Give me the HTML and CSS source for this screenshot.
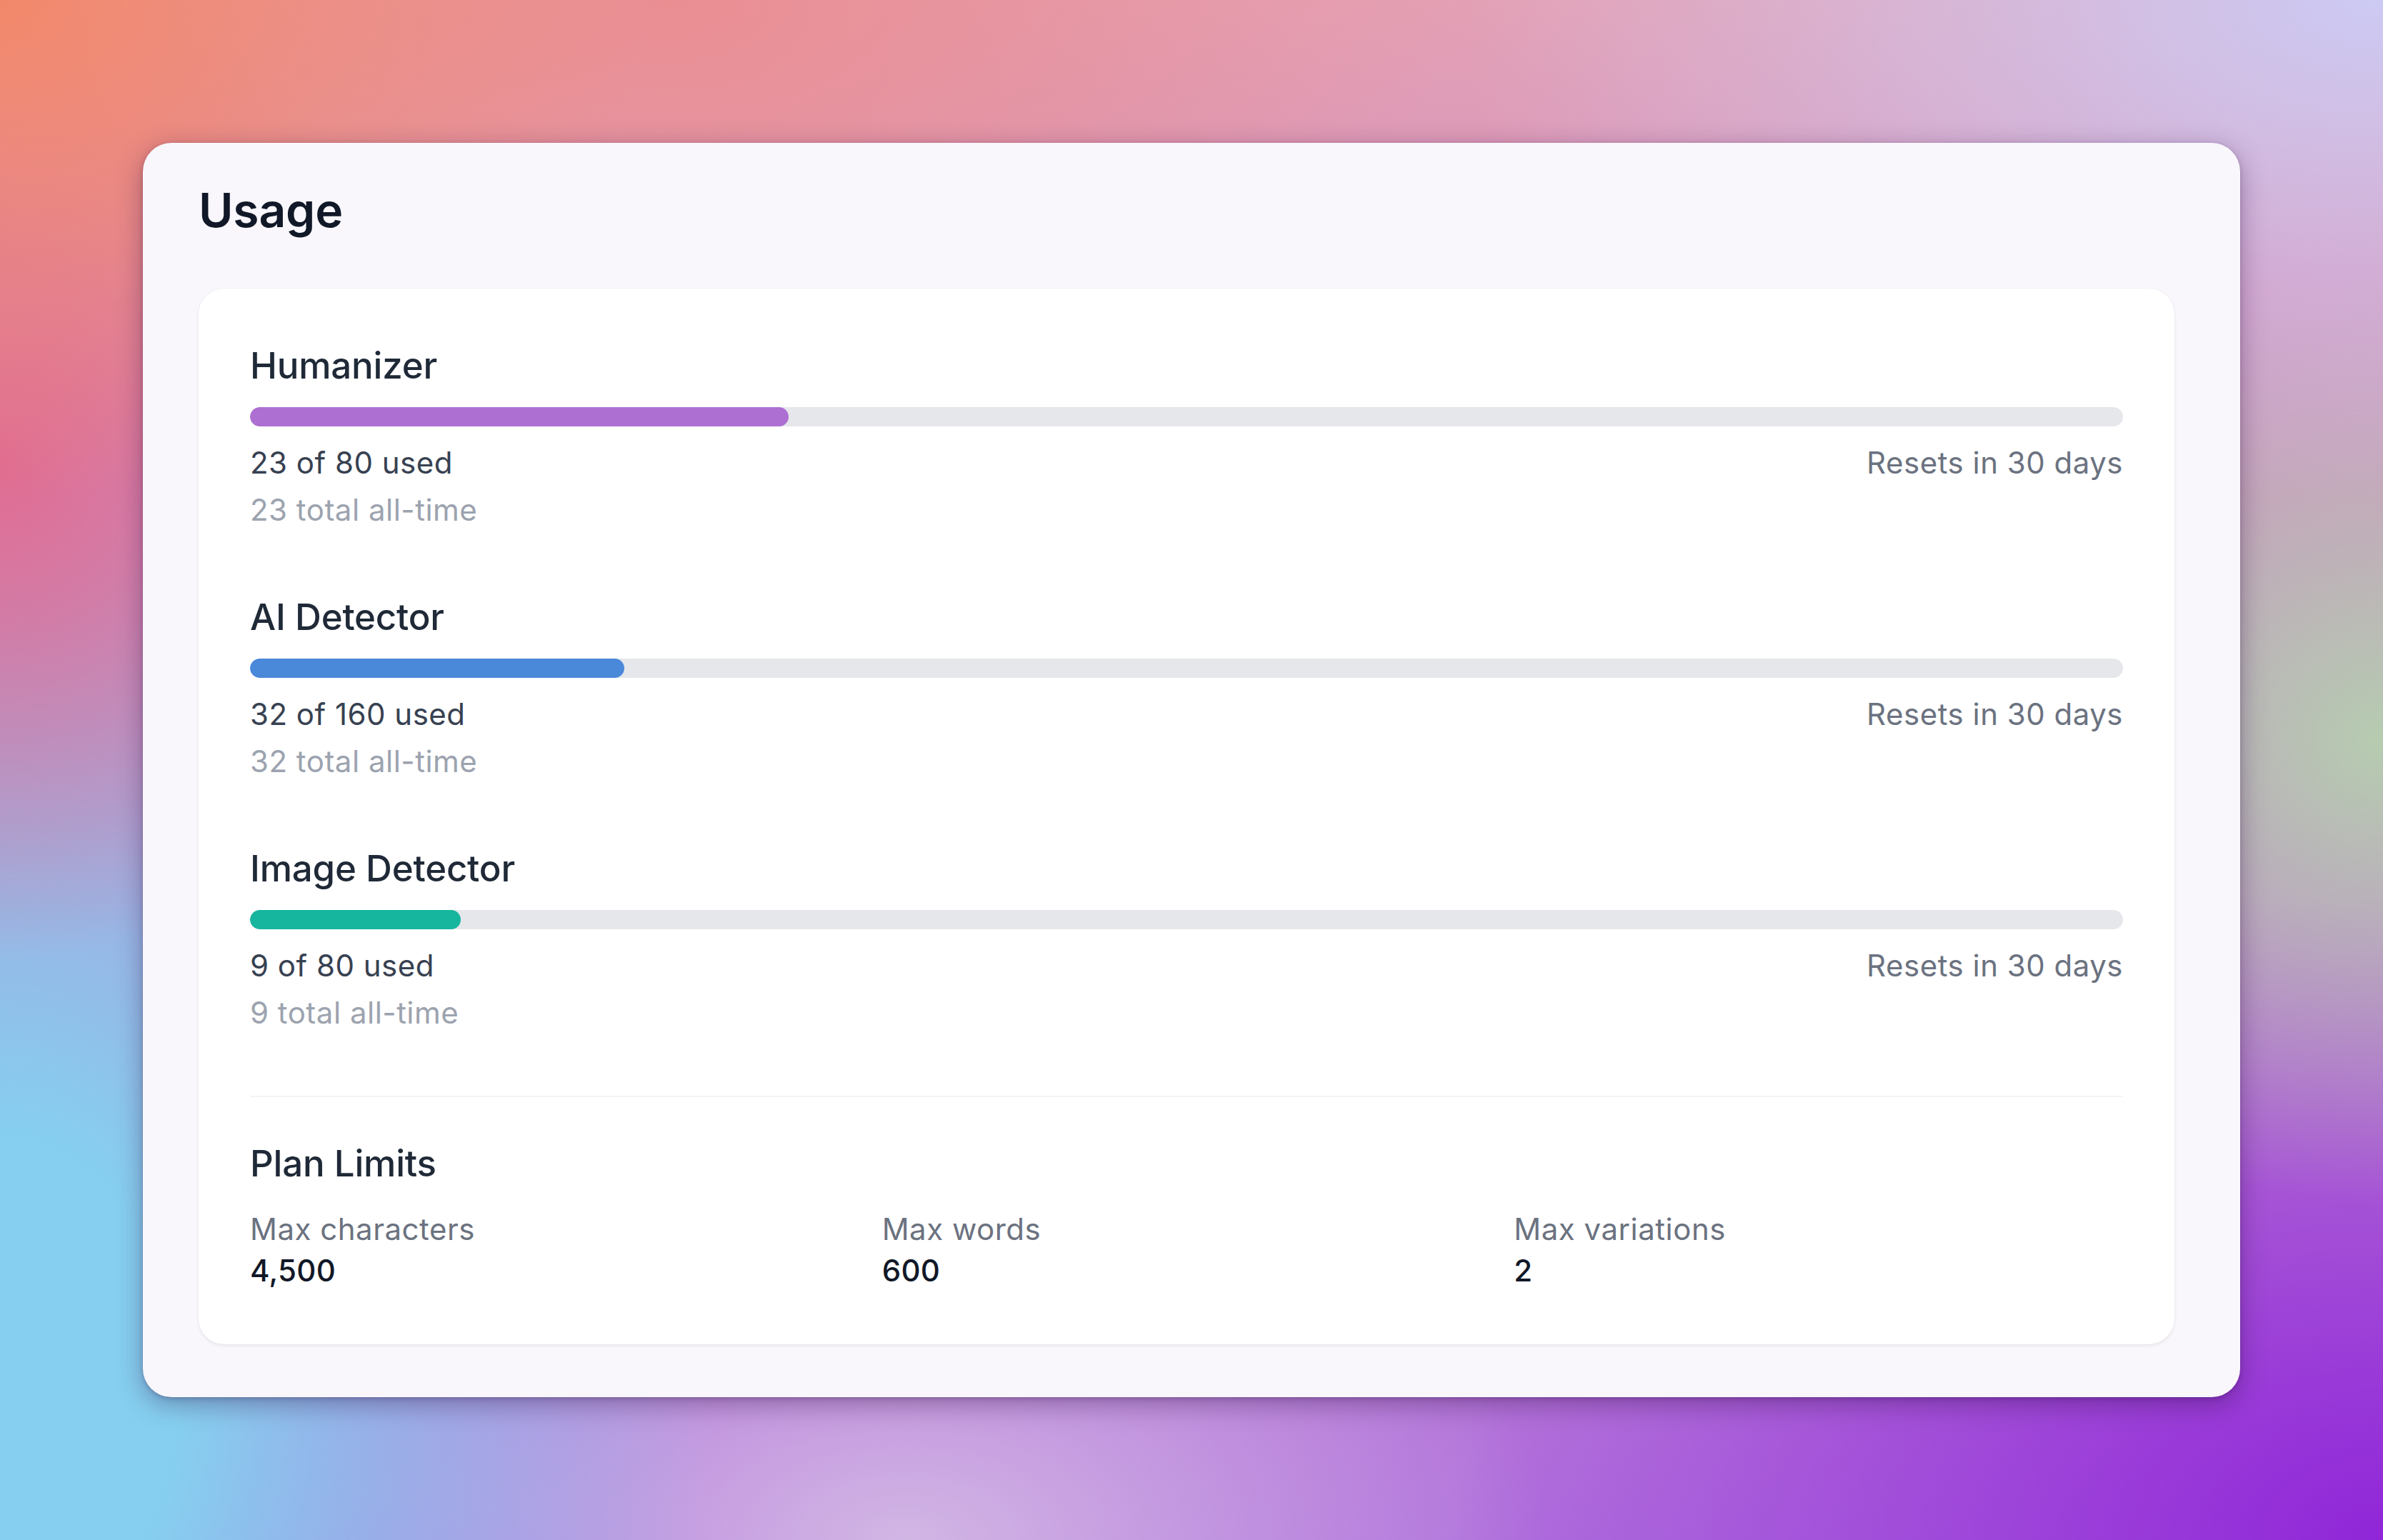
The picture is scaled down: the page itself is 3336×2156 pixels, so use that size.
FILE: index.html
```html
<!DOCTYPE html>
<html lang="en">
<head>
<meta charset="utf-8">
<title>Usage</title>
<link rel="stylesheet" href="styles.css">
</head>
<body>
<div class="page">
  <section class="card">
    <h1 class="title">Usage</h1>
    <div class="panel">
      <div class="meter">
        <h2 class="meter-name">Humanizer</h2>
        <div class="track"><div class="fill fill-purple" style="width: 28.75%"></div></div>
        <div class="meter-row">
          <span class="used">23 of 80 used</span>
          <span class="resets">Resets in 30 days</span>
        </div>
        <div class="total">23 total all-time</div>
      </div>
      <div class="meter">
        <h2 class="meter-name">AI Detector</h2>
        <div class="track"><div class="fill fill-blue" style="width: 20%"></div></div>
        <div class="meter-row">
          <span class="used">32 of 160 used</span>
          <span class="resets">Resets in 30 days</span>
        </div>
        <div class="total">32 total all-time</div>
      </div>
      <div class="meter">
        <h2 class="meter-name">Image Detector</h2>
        <div class="track"><div class="fill fill-teal" style="width: 11.25%"></div></div>
        <div class="meter-row">
          <span class="used">9 of 80 used</span>
          <span class="resets">Resets in 30 days</span>
        </div>
        <div class="total">9 total all-time</div>
      </div>
      <hr class="divider">
      <div class="limits">
        <h2 class="meter-name">Plan Limits</h2>
        <div class="limits-grid">
          <div class="limit">
            <div class="limit-label">Max characters</div>
            <div class="limit-value">4,500</div>
          </div>
          <div class="limit">
            <div class="limit-label">Max words</div>
            <div class="limit-value">600</div>
          </div>
          <div class="limit">
            <div class="limit-label">Max variations</div>
            <div class="limit-value">2</div>
          </div>
        </div>
      </div>
    </div>
  </section>
</div>
</body>
</html>
```
FILE: styles.css
```css
* { box-sizing: border-box; }

html, body {
  margin: 0;
  padding: 0;
}

body {
  width: 3336px;
  height: 2156px;
  overflow: hidden;
  font-family: Inter, "Noto Sans", "Liberation Sans", sans-serif;
  background-color: #c99ad8;
  background-image:
    radial-gradient(ellipse 900px 700px at 0% 0%, #f2886a 0%, rgba(242,136,106,0) 100%),
    radial-gradient(ellipse 1100px 600px at 28% 0%, #ea8e92 0%, rgba(234,142,146,0) 100%),
    radial-gradient(ellipse 600px 700px at 0% 30%, #e06c92 0%, rgba(224,108,146,0) 100%),
    radial-gradient(ellipse 1300px 700px at 100% 0%, #cccaf4 0%, rgba(204,202,244,0) 100%),
    radial-gradient(ellipse 700px 650px at 100% 48%, #b6ccb0 0%, rgba(182,204,176,0) 100%),
    radial-gradient(ellipse 1000px 1400px at 0% 90%, #86cff0 0%, #86cff0 25%, rgba(134,207,240,0) 100%),
    radial-gradient(ellipse 1300px 900px at 100% 100%, #9026d8 0%, rgba(144,38,216,0) 100%),
    radial-gradient(ellipse 900px 500px at 38% 100%, #d2b6e4 0%, rgba(210,182,228,0) 100%),
    linear-gradient(180deg, #e4a0b4 0%, #c486c8 45%, #b070dc 100%);
}

.page {
  padding: 200px;
}

.card {
  background: #f9f7fc;
  border-radius: 40px;
  padding: 54px 92px 74px 78px;
  box-shadow: 0 10px 36px rgba(40, 10, 60, 0.35), 0 2px 6px rgba(40, 10, 60, 0.2);
}

.title {
  margin: 0;
  font-size: 66px;
  line-height: 80px;
  font-weight: 600;
  color: #111827;
  letter-spacing: -0.2px;
}

.panel {
  margin-top: 70px;
  background: #ffffff;
  border-radius: 36px;
  padding: 77px 72px 74px 72px;
  box-shadow: 0 2px 5px rgba(0, 0, 0, 0.08), 0 0 2px rgba(0, 0, 0, 0.03);
}

.meter + .meter {
  margin-top: 86px;
}

.meter-name {
  margin: 0;
  font-size: 51px;
  line-height: 62px;
  font-weight: 500;
  color: #1f2937;
  letter-spacing: -0.2px;
}

.track {
  margin-top: 27px;
  height: 27px;
  border-radius: 14px;
  background: #e5e7eb;
  overflow: hidden;
}

.fill {
  height: 100%;
  border-radius: 14px;
}

.fill-purple { background: #ae6fd3; }
.fill-blue { background: #4a88d9; }
.fill-teal { background: #16b59e; }

.meter-row {
  margin-top: 18px;
  display: flex;
  justify-content: space-between;
  align-items: baseline;
}

.used,
.resets,
.total {
  font-size: 42px;
  line-height: 66px;
  letter-spacing: 0.5px;
}

.used { color: #374151; }
.resets { color: #6b7280; }
.total { color: #9ca3af; }

.divider {
  margin: 83px 0 0 0;
  border: 0;
  height: 2px;
  background: #f3f4f6;
}

.limits {
  margin-top: 62px;
}

.limits-grid {
  margin-top: 32px;
  display: grid;
  grid-template-columns: repeat(3, 1fr);
  column-gap: 32px;
}

.limit-label {
  font-size: 42px;
  line-height: 58px;
  color: #6b7280;
  letter-spacing: 0.5px;
}

.limit-value {
  font-size: 42px;
  line-height: 58px;
  font-weight: 500;
  color: #111827;
  letter-spacing: 0.3px;
}
```
